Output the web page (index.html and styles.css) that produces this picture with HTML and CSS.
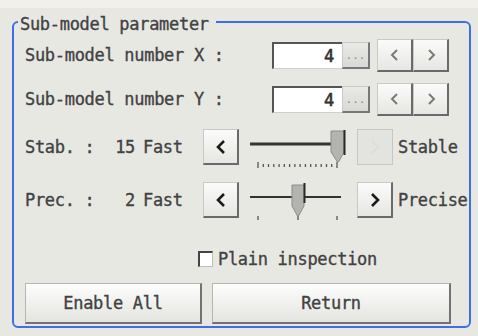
FILE: index.html
```html
<!DOCTYPE html>
<html>
<head>
<meta charset="utf-8">
<link rel="stylesheet" href="styles.css">
</head>
<body>
<div class="panel">
  <fieldset class="group">
    <legend class="title">Sub-model parameter</legend>
    <div class="content">
      <div class="row row-x">
        <span class="label">Sub-model number X :</span>
        <div class="numbox"><span class="num">4</span><span class="more">...</span></div>
        <div class="steppers">
          <button class="step"><svg width="10" height="14" viewBox="0 0 10 14"><polyline points="7,2 2,7 7,12" class="chev-light"/></svg></button>
          <button class="step"><svg width="10" height="14" viewBox="0 0 10 14"><polyline points="3,2 8,7 3,12" class="chev-light"/></svg></button>
        </div>
      </div>
      <div class="row row-y">
        <span class="label">Sub-model number Y :</span>
        <div class="numbox"><span class="num">4</span><span class="more">...</span></div>
        <div class="steppers">
          <button class="step"><svg width="10" height="14" viewBox="0 0 10 14"><polyline points="7,2 2,7 7,12" class="chev-light"/></svg></button>
          <button class="step"><svg width="10" height="14" viewBox="0 0 10 14"><polyline points="3,2 8,7 3,12" class="chev-light"/></svg></button>
        </div>
      </div>
      <div class="row row-slider row-stab">
        <span class="lbl">Stab. :</span>
        <span class="val">15</span>
        <span class="unit">Fast</span>
        <button class="sbtn"><svg width="12" height="16" viewBox="0 0 12 16"><polyline points="9,2 3,8 9,14" class="chev-dark"/></svg></button>
        <svg class="slider" width="96" height="44" viewBox="0 0 96 44">
          <line x1="0" y1="19" x2="84" y2="19" class="track"/>
          <g class="ticks">
            <line x1="8" y1="37" x2="8" y2="43"/>
            <line x1="13.3" y1="39" x2="13.3" y2="42"/>
            <line x1="18.5" y1="39" x2="18.5" y2="42"/>
            <line x1="23.8" y1="39" x2="23.8" y2="42"/>
            <line x1="29.1" y1="39" x2="29.1" y2="42"/>
            <line x1="34.3" y1="39" x2="34.3" y2="42"/>
            <line x1="39.6" y1="39" x2="39.6" y2="42"/>
            <line x1="44.9" y1="39" x2="44.9" y2="42"/>
            <line x1="50.1" y1="39" x2="50.1" y2="42"/>
            <line x1="55.4" y1="39" x2="55.4" y2="42"/>
            <line x1="60.7" y1="39" x2="60.7" y2="42"/>
            <line x1="65.9" y1="39" x2="65.9" y2="42"/>
            <line x1="71.2" y1="39" x2="71.2" y2="42"/>
            <line x1="76.5" y1="39" x2="76.5" y2="42"/>
            <line x1="81.7" y1="39" x2="81.7" y2="42"/>
            <line x1="87" y1="37" x2="87" y2="43"/>
          </g>
          <polygon points="81,6 94,6 94,27 88.5,37 87.5,37 81,27" class="thumb"/>
          <line x1="94.5" y1="5" x2="94.5" y2="30" class="thumb-edge"/>
        </svg>
        <button class="sbtn sbtn-next disabled"><svg width="12" height="16" viewBox="0 0 12 16"><polyline points="3,2 9,8 3,14" class="chev-off"/></svg></button>
        <span class="end">Stable</span>
      </div>
      <div class="row row-slider row-prec">
        <span class="lbl">Prec. :</span>
        <span class="val">2</span>
        <span class="unit">Fast</span>
        <button class="sbtn"><svg width="12" height="16" viewBox="0 0 12 16"><polyline points="9,2 3,8 9,14" class="chev-dark"/></svg></button>
        <svg class="slider" width="96" height="44" viewBox="0 0 96 44">
          <line x1="0" y1="19" x2="91" y2="19" class="track thin"/>
          <g class="ticks">
            <line x1="8" y1="38" x2="8" y2="42"/>
            <line x1="48" y1="38" x2="48" y2="42"/>
            <line x1="87" y1="38" x2="87" y2="42"/>
          </g>
          <polygon points="42,7 54,7 54,28 48.5,38 47.5,38 42,28" class="thumb"/>
          <line x1="54.5" y1="5" x2="54.5" y2="25" class="thumb-edge"/>
        </svg>
        <button class="sbtn sbtn-next"><svg width="12" height="16" viewBox="0 0 12 16"><polyline points="3,2 9,8 3,14" class="chev-dark"/></svg></button>
        <span class="end">Precise</span>
      </div>
      <div class="row row-check">
        <span class="check"></span>
        <span class="check-label">Plain inspection</span>
      </div>
      <div class="row row-btns">
        <button class="big big-enable">Enable All</button>
        <button class="big big-return">Return</button>
      </div>
    </div>
  </fieldset>
</div>
</body>
</html>
```

FILE: styles.css
```css
html, body {
  margin: 0;
  padding: 0;
}
body {
  width: 478px;
  height: 336px;
  overflow: hidden;
  background: #f1f0eb;
  font-family: "DejaVu Sans Mono", "Liberation Mono", monospace;
  font-size: 17px;
  letter-spacing: -0.3px;
  color: #424242;
  -webkit-text-stroke: 0.35px #424242;
}
.panel {
  margin-top: 8px;
  height: 328px;
  box-sizing: border-box;
  background: #e8e8e3;
  padding: 3px 7px 0 12px;
}
.group {
  margin: 0;
  padding: 0;
  min-width: 0;
  border: 2px solid #3f6fe4;
  border-radius: 6px;
}
.title {
  margin-left: 4px;
  padding: 4px 7px 0 2px;
  line-height: 18px;
  height: 22px;
  box-sizing: border-box;
}
.content {
  padding: 4px 0 2px 11px;
  display: flex;
  flex-direction: column;
}
.row {
  display: flex;
  align-items: center;
}
.row-x { height: 36px; }
.row-y { height: 36px; margin-top: 8px; }
.row-stab { height: 44px; margin-top: 8px; }
.row-prec { height: 44px; margin-top: 9px; }
.row-check { height: 18px; margin-top: 28px; }
.row-btns { height: 41px; margin-top: 15px; }

.label {
  width: 247px;
  white-space: pre;
}
.numbox {
  display: flex;
  width: 98px;
  height: 27px;
}
.num {
  width: 70px;
  box-sizing: border-box;
  background: #fff;
  border-top: 2px solid #555;
  border-left: 2px solid #555;
  border-bottom: 1px solid #cfcfcb;
  text-align: right;
  padding-right: 8px;
  line-height: 24px;
  color: #333;
  -webkit-text-stroke: 0.6px #333;
}
.more {
  width: 28px;
  box-sizing: border-box;
  background: linear-gradient(#e9e9e5, #d9d9d5);
  border-top: 1px solid #c8c8c4;
  border-left: 1px solid #c8c8c4;
  border-right: 2px solid #777;
  border-bottom: 2px solid #777;
  color: #8a8a8a;
  -webkit-text-stroke: 0;
  font-size: 11px;
  letter-spacing: 0;
  text-align: center;
  line-height: 26px;
}
.steppers {
  display: flex;
  margin-left: 7px;
}
.step, .sbtn, .big {
  margin: 0;
  padding: 0;
  box-sizing: border-box;
  background: linear-gradient(#fbfbfa, #e6e6e2);
  border-top: 1px solid #c9c9c5;
  border-left: 1px solid #c9c9c5;
  border-right: 2px solid #6a6a6a;
  border-bottom: 2px solid #6a6a6a;
  display: flex;
  align-items: center;
  justify-content: center;
  font-family: inherit;
  font-size: 17px;
  letter-spacing: -0.3px;
  color: #424242;
  -webkit-text-stroke: 0.35px #424242;
}
.step {
  width: 36px;
  height: 33px;
}
.chev-light {
  fill: none;
  stroke: #7a7a7a;
  stroke-width: 2;
}
.chev-dark {
  fill: none;
  stroke: #1c1c1c;
  stroke-width: 2.6;
}
.chev-off {
  fill: none;
  stroke: #dcdcd8;
  stroke-width: 2;
}
.lbl {
  width: 81px;
  white-space: pre;
}
.val {
  width: 29px;
  text-align: right;
}
.unit {
  margin-left: 8px;
  width: 60px;
}
.sbtn {
  width: 36px;
  height: 36px;
}
.sbtn.disabled {
  background: #e3e3df;
  border: 1px solid #c6c6c2;
}
.slider {
  margin-left: 11px;
  display: block;
}
.sbtn-next {
  margin-left: 11px;
}
.track {
  stroke: #333;
  stroke-width: 3;
}
.track.thin {
  stroke-width: 2;
}
.ticks line {
  stroke: #555;
  stroke-width: 1.3;
}
.thumb {
  fill: #b3b3b0;
  stroke: #8c8c8a;
  stroke-width: 1;
}
.thumb-edge {
  stroke: #2a2a2a;
  stroke-width: 2;
}
.end {
  margin-left: 5px;
  white-space: nowrap;
}
.check {
  margin-left: 173px;
  width: 15px;
  height: 16px;
  box-sizing: border-box;
  background: #fff;
  border-top: 2px solid #444;
  border-left: 2px solid #444;
  border-right: 1px solid #bdbdb9;
  border-bottom: 1px solid #bdbdb9;
}
.check-label {
  margin-left: 5px;
}
.big {
  height: 41px;
  background: linear-gradient(#fdfdfc, #e4e4e0);
  border-top: 1px solid #b5b5b1;
  border-left: 1px solid #b5b5b1;
  border-right: 2px solid #727272;
  border-bottom: 2px solid #727272;
}
.big-enable { width: 177px; }
.big-return { width: 239px; margin-left: 10px; }
```
